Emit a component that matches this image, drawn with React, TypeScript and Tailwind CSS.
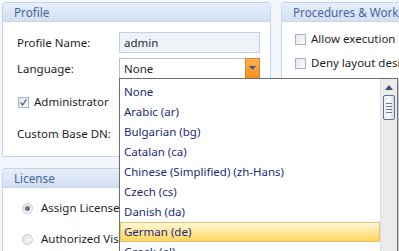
import React from "react";

const font = { fontFamily: '"Segoe UI", "Noto Sans", "Open Sans", sans-serif' };

function Header({ title }: { title: string }) {
  return (
    <div className="h-[19px] bg-gradient-to-b from-[#e6eef9] to-[#d3e0f2] border-b border-[#c9d6e8] pl-[11px] text-[11.7px] leading-[19px] text-[#46659f] whitespace-nowrap overflow-hidden">
      {title}
    </div>
  );
}

function Check({ checked }: { checked?: boolean }) {
  return (
    <div className="w-[11px] h-[11px] border border-[#a5b3c8] bg-gradient-to-br from-[#e4e8ee] to-[#fafbfc] flex items-center justify-center shrink-0">
      {checked && (
        <svg width="9" height="9" viewBox="0 0 9 9">
          <path d="M1.5 4.5 L3.5 7 L7.5 1.5" stroke="#6b7a90" strokeWidth="1.6" fill="none" />
        </svg>
      )}
    </div>
  );
}

function Radio({ checked }: { checked?: boolean }) {
  return (
    <div className="w-[11px] h-[11px] rounded-full border border-[#c4c8cf] bg-gradient-to-br from-[#e0e3e8] to-[#f8f9fa] flex items-center justify-center shrink-0">
      {checked && <div className="w-[5px] h-[5px] rounded-full bg-[#6a7382]" />}
    </div>
  );
}

const items = [
  "None",
  "Arabic (ar)",
  "Bulgarian (bg)",
  "Catalan (ca)",
  "Chinese (Simplified) (zh-Hans)",
  "Czech (cs)",
  "Danish (da)",
  "German (de)",
  "Greek (el)",
];

export default function App() {
  return (
    <div className="relative w-[399px] h-[251px] overflow-hidden bg-[#f3f6fb]" style={font}>
      <div className="flex gap-[10px] pt-[2px] pl-[2px]">
        <div className="w-[269px] flex flex-col gap-[11px] shrink-0">
          <div className="h-[155px] border border-[#c6d4e8] rounded-t-[3px] bg-white">
            <Header title="Profile" />
            <div className="pl-[14px] pr-[10px] pt-[10px] text-[11.5px] text-[#1e1e1e]">
              <div className="flex items-center h-[21px]">
                <div className="w-[102px]">Profile Name:</div>
                <div className="w-[141px] h-[21px] border border-[#c0cfe3] bg-[#eef3fa] pl-[4px] leading-[19px] text-[#2a2a2a]">admin</div>
              </div>
              <div className="flex items-center h-[21px] mt-[5px]">
                <div className="w-[102px]">Language:</div>
                <div className="w-[141px] h-[21px] border border-[#b5c3d8] bg-white flex">
                  <div className="flex-1 pl-[4px] leading-[19px]">None</div>
                  <div className="w-[15px] h-[21px] -mt-px -mr-px bg-gradient-to-b from-[#ffb24a] to-[#f98d1b] border border-[#c88a3a] flex items-start justify-center pt-[7px]">
                    <svg width="7" height="4" viewBox="0 0 7 4"><path d="M0 0 H7 L3.5 4 Z" fill="#3a5a9a" /></svg>
                  </div>
                </div>
              </div>
              <div className="flex items-center h-[20px] mt-[13px] gap-[5px] pl-[1px]">
                <Check checked />
                <div>Administrator</div>
              </div>
              <div className="flex items-center h-[20px] mt-[12px]">
                <div className="w-[102px]">Custom Base DN:</div>
              </div>
            </div>
          </div>
          <div className="h-[100px] border border-[#c6d4e8] rounded-t-[3px] bg-white">
            <Header title="License" />
            <div className="pl-[19px] text-[11.5px] text-[#1e1e1e] whitespace-nowrap">
              <div className="flex items-center h-[20px] mt-[10px] gap-[8px]">
                <Radio checked />
                <div>Assign License</div>
              </div>
              <div className="flex items-center h-[20px] mt-[11px] gap-[8px]">
                <Radio />
                <div>Authorized Visitor</div>
              </div>
            </div>
          </div>
        </div>
        <div className="w-[200px] h-[260px] border border-[#c6d4e8] rounded-t-[3px] bg-white shrink-0">
          <Header title="Procedures & Workspaces" />
          <div className="pl-[13px] text-[11.5px] text-[#1e1e1e] whitespace-nowrap">
            <div className="flex items-center h-[20px] mt-[7px] gap-[5px]">
              <Check />
              <div>Allow execution of procedures</div>
            </div>
            <div className="flex items-center h-[20px] mt-[4px] gap-[5px]">
              <Check />
              <div>Deny layout design</div>
            </div>
          </div>
        </div>
      </div>

      <div className="absolute left-[119px] top-[78px] w-[279px] h-[190px] border border-[#6e6e6e] bg-white flex shadow-[2px_2px_3px_rgba(0,0,0,0.25)]">
        <div className="flex-1 pt-[3px] text-[11.5px] text-[#1c2a78]">
          {items.map((it) => (
            <div
              key={it}
              className={
                it === "German (de)"
                  ? "h-[20px] leading-[18px] pl-[3px] whitespace-nowrap border border-[#e2c46c] bg-gradient-to-b from-[#fff8d8] via-[#ffe79a] to-[#ffd65a]"
                  : "h-[20px] leading-[20px] pl-[4px] whitespace-nowrap"
              }
            >
              {it}
            </div>
          ))}
        </div>
        <div className="w-[17px] bg-[#ebebeb] border-l border-[#e0e0e0] flex flex-col items-center">
          <div className="h-[16px] flex items-center justify-center pt-[1px]">
            <svg width="8" height="5" viewBox="0 0 8 5"><path d="M0 5 H8 L4 0 Z" fill="#3c4f7a" /></svg>
          </div>
          <div className="w-[12px] h-[25px] rounded-[2px] border border-[#5f7094] bg-gradient-to-r from-[#e9eef6] via-[#f7f9fc] to-[#d6deeb] flex flex-col items-center justify-center gap-[2px]">
            <div className="w-[6px] h-px bg-[#6c7a94]" />
            <div className="w-[6px] h-px bg-[#6c7a94]" />
            <div className="w-[6px] h-px bg-[#6c7a94]" />
            <div className="w-[6px] h-px bg-[#6c7a94]" />
          </div>
        </div>
      </div>
    </div>
  );
}
